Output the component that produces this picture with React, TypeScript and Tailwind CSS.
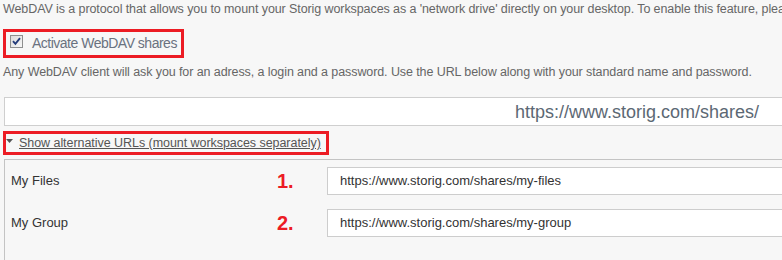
import React from "react";

function Checkbox() {
  return (
    <div className="w-[13px] h-[13px] border border-[#8e8f8f] bg-gradient-to-br from-[#dcdcdc] to-[#f7f7f7] flex items-center justify-center shrink-0">
      <svg width="9" height="9" viewBox="0 0 9 9">
        <path d="M1 4.2 L3.4 6.8 L8 1.2" fill="none" stroke="#243c7a" strokeWidth="1.9" />
      </svg>
    </div>
  );
}

export default function App() {
  const rows = [
    { label: "My Files", n: "1.", url: "https://www.storig.com/shares/my-files" },
    { label: "My Group", n: "2.", url: "https://www.storig.com/shares/my-group" },
  ];
  return (
    <div
      className="w-[782px] h-[260px] overflow-hidden bg-[#f7f7f7]"
      style={{ fontFamily: '"Liberation Sans", Arial, sans-serif' }}
    >
      <div className="w-[900px] pl-[3px] flex flex-col items-start">
        <div className="text-[12.5px] tracking-[-0.09px] leading-[16px] pt-[1px] text-[#666] whitespace-nowrap">
          WebDAV is a protocol that allows you to mount your Storig workspaces as a 'network drive' directly on your desktop. To enable this feature, please check the box below.
        </div>
        <div className="mt-[12px] w-[181px] h-[29px] border-[3px] border-[#ec1c24] flex items-start pt-[3px] pl-[4px]">
          <Checkbox />
          <span className="ml-[9px] text-[14px] leading-[16px] tracking-[-0.5px] text-[#6a7280] whitespace-nowrap">
            Activate WebDAV shares
          </span>
        </div>
        <div className="mt-[6px] text-[12.5px] tracking-[-0.09px] leading-[16px] text-[#666] whitespace-nowrap">
          Any WebDAV client will ask you for an adress, a login and a password. Use the URL below along with your standard name and password.
        </div>
        <div className="mt-[17px] ml-[1px] w-[800px] h-[29px] border border-[#cfcfcf] bg-white flex items-center justify-end pr-[44px]">
          <span className="text-[18px] leading-[20px] text-[#5c6874] whitespace-nowrap">
            https://www.storig.com/shares/
          </span>
        </div>
        <div className="mt-[5px] w-[326px] h-[24px] border-[3px] border-[#ec1c24] flex items-center pl-0">
          <svg width="7" height="5" viewBox="0 0 7 5" className="shrink-0 -mt-[3px]">
            <path d="M0 0 L7 0 L3.5 4 Z" fill="#555" />
          </svg>
          <span className="ml-[6px] text-[12.5px] tracking-[-0.05px] leading-[16px] text-[#555] underline whitespace-nowrap">
            Show alternative URLs (mount workspaces separately)
          </span>
        </div>
        <div className="mt-[4px] ml-[1px] w-[850px] h-[120px] border border-[#c4c4c4] bg-[#f7f7f7] pl-[6px] pt-[7px] flex flex-col gap-[14px]">
          {rows.map((r) => (
            <div key={r.label} className="flex items-center h-[28px]">
              <div className="w-[266px] text-[13px] text-[#333]">{r.label}</div>
              <div className="w-[50px] text-[20px] font-bold text-[#ec1c24] leading-[20px]">{r.n}</div>
              <div className="w-[520px] h-[28px] border border-[#cdcdcd] bg-white flex items-center pl-[12px] text-[13px] text-[#333]">
                {r.url}
              </div>
            </div>
          ))}
        </div>
      </div>
    </div>
  );
}
